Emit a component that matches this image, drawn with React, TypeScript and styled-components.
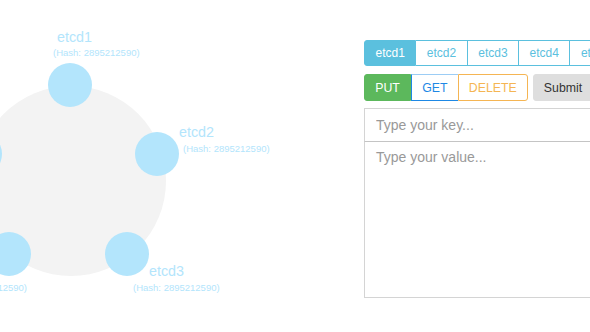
import styled, { createGlobalStyle, css } from 'styled-components';
import { useState } from 'react';

type Node = {
  name: string;
  x: number;
  y: number;
  label: { x: number; y: number; anchor?: 'start' | 'end' };
  hash: { x: number; y: number; anchor?: 'start' | 'end' };
};

const NODES: Node[] = [
  { name: 'etcd1', x: 70, y: 85, label: { x: 57, y: 42 }, hash: { x: 53, y: 56 } },
  { name: 'etcd2', x: 157, y: 154, label: { x: 179, y: 137 }, hash: { x: 183, y: 152 } },
  { name: 'etcd3', x: 127, y: 254, label: { x: 149, y: 276 }, hash: { x: 133, y: 291 } },
  { name: 'etcd4', x: 9, y: 254, label: { x: -13, y: 276, anchor: 'end' }, hash: { x: 27, y: 291, anchor: 'end' } },
  { name: 'etcd5', x: -20, y: 154, label: { x: -42, y: 137, anchor: 'end' }, hash: { x: -46, y: 152, anchor: 'end' } },
];

const HASH = '2895212590';
const TABS = ['etcd1', 'etcd2', 'etcd3', 'etcd4', 'etcd5'];
type Method = 'PUT' | 'GET' | 'DELETE';

const GlobalStyle = createGlobalStyle`
  html, body {
    margin: 0;
    padding: 0;
    background: #fff;
    overflow: hidden;
  }
  body {
    font-family: "Liberation Sans", Arial, sans-serif;
  }
`;

export default function App() {
  const [active, setActive] = useState('etcd1');
  const [method, setMethod] = useState<Method>('PUT');
  return (
    <>
      <GlobalStyle />
      <Page>
        <Diagram width={364} height={332} viewBox="0 0 364 332">
          <circle cx={71} cy={181} r={95} fill="#f3f3f3" />
          {NODES.map(n => (
            <g key={n.name}>
              <circle cx={n.x} cy={n.y} r={22} fill="#b3e5fc" />
              <NodeName x={n.label.x} y={n.label.y} textAnchor={n.label.anchor || 'start'}>
                {n.name}
              </NodeName>
              <NodeHash x={n.hash.x} y={n.hash.y} textAnchor={n.hash.anchor || 'start'}>
                (Hash: {HASH})
              </NodeHash>
            </g>
          ))}
        </Diagram>
        <Panel>
          <Tabs>
            {TABS.map(t => (
              <Tab key={t} $active={active === t} onClick={() => setActive(t)}>
                {t}
              </Tab>
            ))}
          </Tabs>
          <Actions>
            <MethodGroup>
              <MethodButton $kind="PUT" $active={method === 'PUT'} onClick={() => setMethod('PUT')}>
                PUT
              </MethodButton>
              <MethodButton $kind="GET" $active={method === 'GET'} onClick={() => setMethod('GET')}>
                GET
              </MethodButton>
              <MethodButton $kind="DELETE" $active={method === 'DELETE'} onClick={() => setMethod('DELETE')}>
                DELETE
              </MethodButton>
            </MethodGroup>
            <SubmitButton>Submit</SubmitButton>
          </Actions>
          <KeyInput placeholder="Type your key..." />
          <ValueInput placeholder="Type your value..." />
        </Panel>
      </Page>
    </>
  );
}

const Page = styled.div`
  display: flex;
  width: 700px;
  height: 332px;
`;

const Diagram = styled.svg`
  flex: 0 0 364px;
  display: block;
`;

const NodeName = styled.text`
  font-family: "Liberation Sans", Arial, sans-serif;
  font-size: 14.3px;
  fill: #b3e5fc;
`;

const NodeHash = styled.text`
  font-family: "Liberation Sans", Arial, sans-serif;
  font-size: 9.5px;
  fill: #b3e5fc;
`;

const Panel = styled.div`
  display: flex;
  flex-direction: column;
  width: 300px;
  padding-top: 40px;
`;

const Tabs = styled.div`
  display: flex;
`;

const Tab = styled.button<{ $active: boolean }>`
  height: 26px;
  padding: 0 10.5px;
  font-family: inherit;
  font-size: 12px;
  border: 1px solid #5bc0de;
  border-left: none;
  background: ${p => (p.$active ? '#5bc0de' : '#fff')};
  color: ${p => (p.$active ? '#fff' : '#5bc0de')};
  cursor: pointer;

  &:first-child {
    border-left: 1px solid #5bc0de;
    border-radius: 3px 0 0 3px;
  }
  &:last-child {
    border-radius: 0 3px 3px 0;
  }
`;

const Actions = styled.div`
  display: flex;
  gap: 5px;
  margin-top: 8px;
`;

const MethodGroup = styled.div`
  display: flex;
`;

const kindStyles = {
  PUT: css`
    background: #5cb85c;
    color: #fff;
    border: 1px solid #5cb85c;
    border-radius: 3px 0 0 3px;
  `,
  GET: css`
    background: #fff;
    color: #1e88e5;
    border: 1px solid #1e88e5;
    border-top-color: #9ccdf5;
    border-right: none;
  `,
  DELETE: css`
    background: #fff;
    color: #f5b553;
    border: 1px solid #f5b553;
    border-radius: 0 3px 3px 0;
  `,
};

const MethodButton = styled.button<{ $kind: Method; $active: boolean }>`
  height: 27px;
  padding: 0 10.2px;
  font-family: inherit;
  font-size: 12.3px;
  cursor: pointer;
  ${p => kindStyles[p.$kind]}
`;

const SubmitButton = styled.button`
  height: 27px;
  padding: 0 10px;
  font-family: inherit;
  font-size: 12.3px;
  color: #333;
  background: #dedede;
  border: 1px solid #dedede;
  border-radius: 3px;
  cursor: pointer;
`;

const fieldBase = css`
  box-sizing: border-box;
  width: 100%;
  padding: 0 11px;
  font-family: "Liberation Sans", Arial, sans-serif;
  font-size: 14px;
  color: #333;
  border: 1px solid #d4d4d4;
  outline: none;
  &::placeholder {
    color: #999;
  }
`;

const KeyInput = styled.input`
  ${fieldBase}
  height: 34px;
  margin-top: 7px;
  border-bottom-color: #c4c4c4;
`;

const ValueInput = styled.textarea`
  ${fieldBase}
  height: 157px;
  margin-top: -1px;
  padding-top: 7px;
  resize: none;
  border-top-color: #c4c4c4;
`;
